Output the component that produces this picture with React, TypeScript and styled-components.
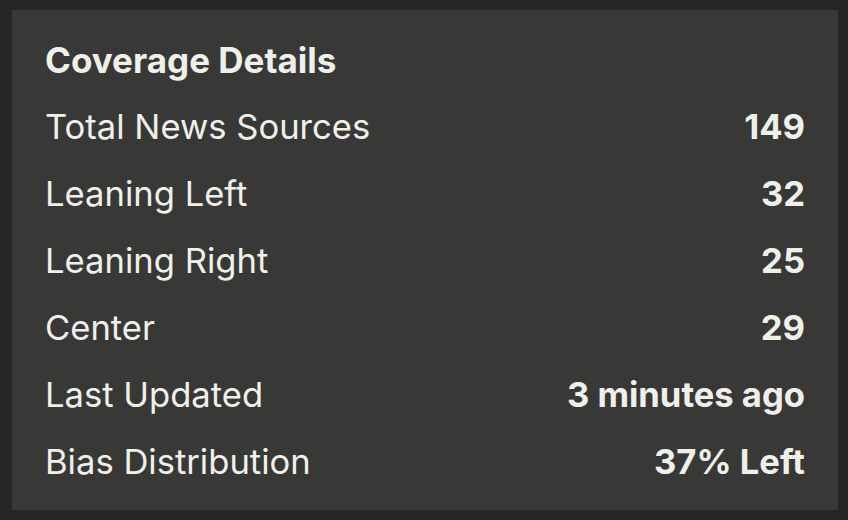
import React from "react";
import styled, { createGlobalStyle } from "styled-components";

const Global = createGlobalStyle`
  html, body { margin: 0; padding: 0; background: #252525; }
  body { font-family: Inter, "Liberation Sans", sans-serif; }
`;

const Page = styled.div`
  width: 848px;
  height: 520px;
  box-sizing: border-box;
  padding: 10px 10px 10px 12px;
  display: flex;
`;

const Card = styled.section`
  flex: 1;
  background: #383837;
  box-sizing: border-box;
  padding: 28px 33px 0 33px;
  display: flex;
  flex-direction: column;
  color: #f0f0eb;
`;

const Title = styled.h2`
  margin: 0 0 11px;
  font-size: 35px;
  font-weight: 700;
  line-height: 44px;
`;

const Row = styled.div`
  display: flex;
  justify-content: space-between;
  align-items: baseline;
  height: 67px;
  line-height: 67px;
  font-size: 34.6px;
`;

const Label = styled.span`
  font-weight: 400;
`;

const Value = styled.span`
  font-weight: 700;
`;

const rows: [string, string][] = [
  ["Total News Sources", "149"],
  ["Leaning Left", "32"],
  ["Leaning Right", "25"],
  ["Center", "29"],
  ["Last Updated", "3 minutes ago"],
  ["Bias Distribution", "37% Left"],
];

export default function App() {
  return (
    <>
      <Global />
      <Page>
        <Card>
          <Title>Coverage Details</Title>
          {rows.map(([l, v]) => (
            <Row key={l}>
              <Label>{l}</Label>
              <Value>{v}</Value>
            </Row>
          ))}
        </Card>
      </Page>
    </>
  );
}
